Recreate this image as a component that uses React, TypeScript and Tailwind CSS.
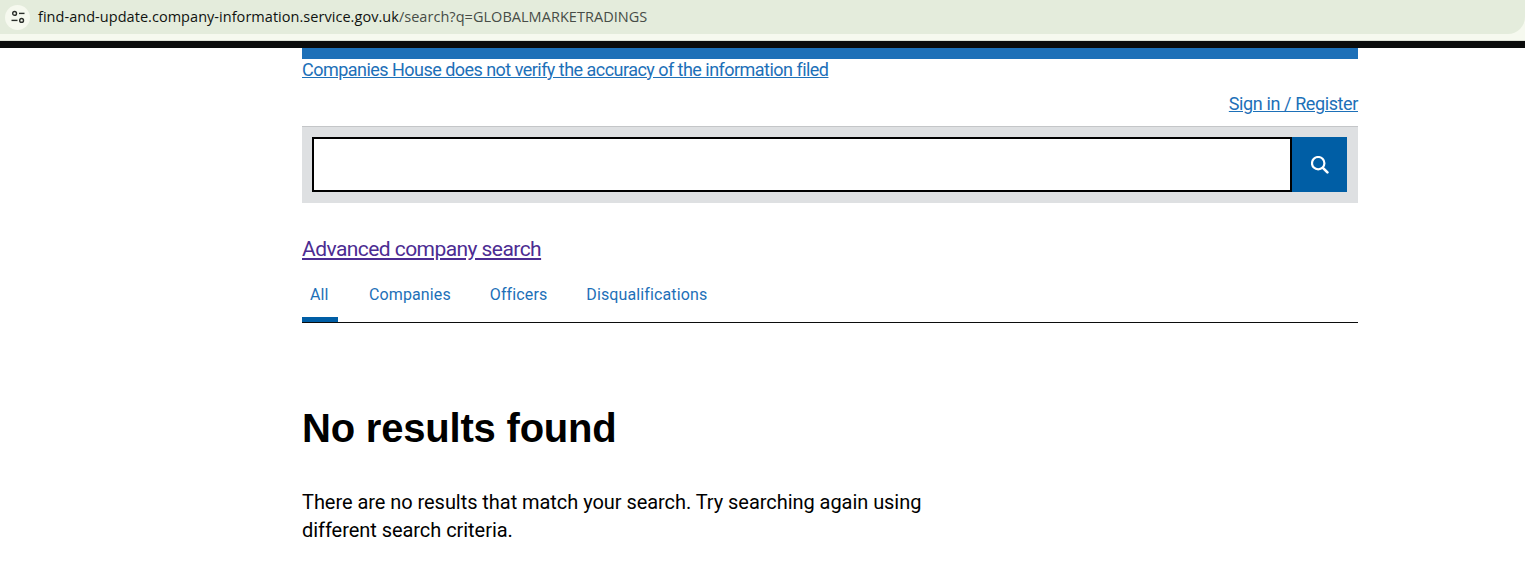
const tabs = ['All', 'Companies', 'Officers', 'Disqualifications'];

function SiteInfoIcon() {
  return (
    <svg width="16" height="16" viewBox="0 0 16 16" fill="none" stroke="#2b2f2b" strokeWidth="1.4">
      <circle cx="4.6" cy="4.4" r="1.9" />
      <path d="M9 4.4h5.5" />
      <path d="M1.5 11.4h6" />
      <circle cx="11.6" cy="11.4" r="1.9" />
    </svg>
  );
}

function SearchIcon() {
  return (
    <svg width="18" height="18" viewBox="0 0 18 18" fill="none" stroke="#ffffff" strokeLinecap="round">
      <circle cx="7.2" cy="7.2" r="6.2" strokeWidth="2.2" />
      <path d="M12.4 12.4L16.4 16.4" strokeWidth="2.6" />
    </svg>
  );
}

export default function App() {
  return (
    <div className="h-[578px] overflow-hidden bg-white font-['Roboto',sans-serif] text-[#0b0c0c]">
      {/* browser address bar */}
      <div className="h-[41px] border-b border-[#dfe3d8] bg-[#f6f9ef]">
        <div className="flex h-[34px] items-center rounded-br-[17px] bg-[#e4ecdc] pl-[5px]">
          <div className="flex h-[25px] w-[25px] items-center justify-center rounded-full bg-[#f6f9ef]">
            <SiteInfoIcon />
          </div>
          <span className="ml-[8px] whitespace-nowrap font-['Open_Sans',sans-serif] text-[14.5px] tracking-[0.04px]">
            <span className="text-[#101310]">find-and-update.company-information.service.gov.uk</span>
            <span className="text-[#474c47]">/search?q=GLOBALMARKETRADINGS</span>
          </span>
        </div>
      </div>
      <div className="h-[7px] bg-[#0b0c0c]" />

      <div className="ml-[302px] w-[1056px]">
        <div className="h-[11px] bg-[#1d70b8]" />
        <a href="#" className="mt-[1px] block text-[18px] leading-[20px] tracking-[-0.53px] text-[#1d70b8] underline">
          Companies House does not verify the accuracy of the information filed
        </a>
        <div className="mt-[13px] text-right">
          <a href="#" className="text-[18px] leading-[20px] tracking-[-0.39px] text-[#1d70b8] underline">
            Sign in / Register
          </a>
        </div>

        <div className="mt-[9px] flex h-[77px] border-t border-[#c4c6c8] bg-[#dee0e2] pt-[10px] pr-[11px] pl-[10px]">
          <input className="h-[55px] flex-1 border-2 border-black bg-white outline-none" aria-label="Search" />
          <button className="flex h-[55px] w-[55px] items-center justify-center bg-[#005ea5]" aria-label="Search submit">
            <SearchIcon />
          </button>
        </div>

        <a href="#" className="mt-[34px] block w-fit text-[21px] leading-[25px] tracking-[-0.56px] text-[#4c2c92] underline">
          Advanced company search
        </a>

        <div className="mt-[13px] flex h-[48px] gap-[3px] border-b border-[#0b0c0c]">
          {tabs.map((tab, i) => (
            <a
              key={tab}
              href="#"
              className={`px-[8px] pt-[10px] text-[16px] leading-[20px] tracking-[0.12px] text-[#1d70b8] ${i === 0 ? 'w-[36px] border-b-[5px] border-[#005ea5]' : 'ml-[20px]'}`}
            >
              {tab}
            </a>
          ))}
        </div>

        <h1 className="mt-[77px] font-['Liberation_Sans',sans-serif] text-[40px] leading-[56px] font-bold tracking-[-0.2px] text-black">
          No results found
        </h1>
        <p className="mt-[32px] w-[640px] text-[20px] leading-[28px] tracking-[-0.05px] text-black">
          There are no results that match your search. Try searching again using different search criteria.
        </p>
      </div>
    </div>
  );
}
